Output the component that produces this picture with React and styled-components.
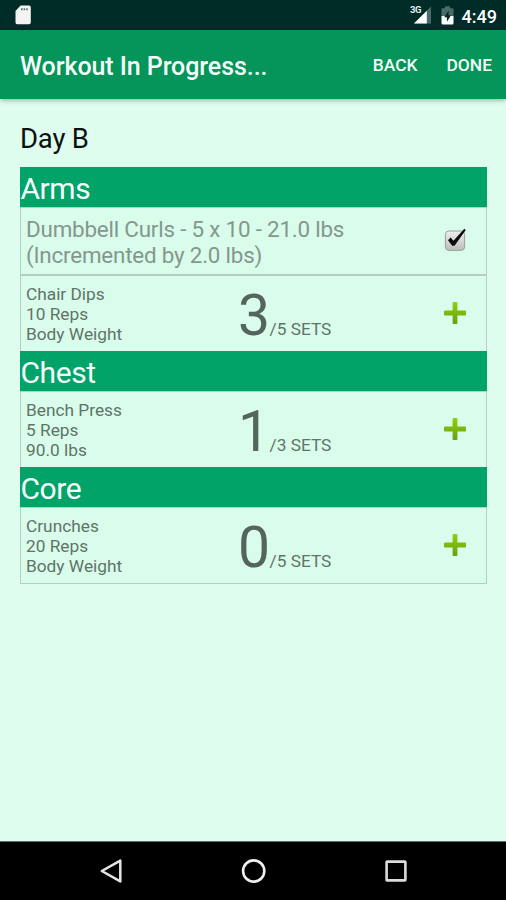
import React, { useState } from 'react';
import styled, { createGlobalStyle } from 'styled-components';

const workout = [
    {
        name: 'Arms',
        exercises: [
            { name: 'Dumbbell Curls', done: true, summary: ['Dumbbell Curls - 5 x 10 - 21.0 lbs', '(Incremented by 2.0 lbs)'] },
            { name: 'Chair Dips', reps: 10, weight: 'Body Weight', completed: 3, sets: 5 },
        ],
    },
    {
        name: 'Chest',
        exercises: [{ name: 'Bench Press', reps: 5, weight: '90.0 lbs', completed: 1, sets: 3 }],
    },
    {
        name: 'Core',
        exercises: [{ name: 'Crunches', reps: 20, weight: 'Body Weight', completed: 0, sets: 5 }],
    },
];

const SdCardIcon = () => (
    <svg width="17" height="20" viewBox="0 0 17 20">
        <path d="M5.6 0.5H14a1.8 1.8 0 0 1 1.8 1.8V17.5a1.8 1.8 0 0 1-1.8 1.8H2.3A1.8 1.8 0 0 1 0.5 17.5V6z" fill="#f4f4f4" />
        <path d="M6.8 3.2v2M9.4 3.2v2M12 3.2v2" stroke="#66706e" strokeWidth="1.6" />
    </svg>
);

const SignalIcon = () => (
    <svg width="22" height="20" viewBox="0 0 22 20">
        <path d="M21 1.5V18.5H4z" fill="#4c6b68" />
        <path d="M16.8 5.7V18.5H4z" fill="#fff" />
        <path d="M0 0H12V9H0z" fill="#002c28" />
        <text x="0" y="8.4" fontSize="9.5" fontWeight="700" fill="#e4ebea" fontFamily="Roboto, sans-serif" textLength="11.5">3G</text>
    </svg>
);

const BatteryIcon = () => (
    <svg width="13" height="19" viewBox="0 0 13 19">
        <path d="M4 0.3h5v1.9h2.3a1.2 1.2 0 0 1 1.2 1.2V10H0.5V3.4a1.2 1.2 0 0 1 1.2-1.2H4z" fill="#4c6b68" />
        <path d="M0.5 10h12v7.3a1.2 1.2 0 0 1-1.2 1.2H1.7a1.2 1.2 0 0 1-1.2-1.2z" fill="#fff" />
        <path d="M7.6 4.6L3.2 11.2h2.7v4.6l4.2-6.6H7.6z" fill="#002c28" />
    </svg>
);

const CheckIcon = () => (
    <svg width="24" height="27" viewBox="0 0 24 27">
        <defs>
            <linearGradient id="box" x1="0" y1="0" x2="0" y2="1">
                <stop offset="0" stopColor="#eeeeee" />
                <stop offset="1" stopColor="#bcbcbc" />
            </linearGradient>
        </defs>
        <rect x="2.4" y="4" width="19.2" height="19.4" rx="3.5" fill="url(#box)" stroke="#98a39d" strokeWidth="1" />
        <path d="M5 13.2L7.6 10.6L10.5 13.8L21.3 1.8L22.8 2.9L11.5 18.8H9.2z" fill="#0c0c0c" />
    </svg>
);

const PlusIcon = () => (
    <svg width="24" height="24" viewBox="0 0 24 24">
        <defs>
            <linearGradient id="plus" x1="0" y1="0" x2="0" y2="1">
                <stop offset="0" stopColor="#91d006" />
                <stop offset="1" stopColor="#66a012" />
            </linearGradient>
        </defs>
        <path
            d="M10.6 1h2.8a1 1 0 0 1 1 1v7.6H22a1 1 0 0 1 1 1v2.8a1 1 0 0 1-1 1h-7.6V22a1 1 0 0 1-1 1h-2.8a1 1 0 0 1-1-1v-7.6H2a1 1 0 0 1-1-1v-2.8a1 1 0 0 1 1-1h7.6V2a1 1 0 0 1 1-1z"
            fill="url(#plus)"
        />
    </svg>
);

const App = () => {
    const [groups, setGroups] = useState(workout);

    const addSet = (exerciseName) => {
        setGroups(groups.map((group) => ({
            ...group,
            exercises: group.exercises.map((ex) => (
                ex.name === exerciseName ? { ...ex, completed: Math.min(ex.completed + 1, ex.sets) } : ex
            )),
        })));
    };

    return (
        <Screen>
            <GlobalStyle />
            <StatusBar>
                <SdCardIcon />
                <StatusIcons>
                    <SignalIcon />
                    <BatteryIcon />
                    <Clock>4:49</Clock>
                </StatusIcons>
            </StatusBar>
            <AppBar>
                <Title>Workout In Progress...</Title>
                <BarButton>BACK</BarButton>
                <BarButton>DONE</BarButton>
            </AppBar>
            <Content>
                <DayName>Day B</DayName>
                <Table>
                    {groups.map((group) => (
                        <React.Fragment key={group.name}>
                            <GroupHeader>{group.name}</GroupHeader>
                            {group.exercises.map((ex) => (
                                ex.done ? (
                                    <Row key={ex.name} $height={67}>
                                        <Summary>
                                            {ex.summary.map((line) => <div key={line}>{line}</div>)}
                                        </Summary>
                                        <Action><CheckIcon /></Action>
                                    </Row>
                                ) : (
                                    <Row key={ex.name} $height={76}>
                                        <Details>
                                            <div>{ex.name}</div>
                                            <div>{ex.reps} Reps</div>
                                            <div>{ex.weight}</div>
                                        </Details>
                                        <Sets>
                                            <Count>{ex.completed}</Count>
                                            /{ex.sets} SETS
                                        </Sets>
                                        <Action onClick={() => addSet(ex.name)}><PlusIcon /></Action>
                                    </Row>
                                )
                            ))}
                        </React.Fragment>
                    ))}
                </Table>
            </Content>
            <NavBar>
                <svg width="24" height="26" viewBox="0 0 24 26">
                    <path d="M21.3 2.6V23.4L2.8 13z" fill="none" stroke="#e6e6e6" strokeWidth="2.5" strokeLinejoin="round" />
                </svg>
                <svg width="26" height="26" viewBox="0 0 26 26">
                    <circle cx="12.7" cy="13" r="10.6" fill="none" stroke="#f0f0f0" strokeWidth="2.6" />
                </svg>
                <svg width="24" height="26" viewBox="0 0 24 26">
                    <rect x="2.6" y="3.6" width="18.8" height="18.8" rx="0.6" fill="none" stroke="#dcdcdc" strokeWidth="2.6" />
                </svg>
            </NavBar>
        </Screen>
    );
};

export default App;

// Styled Components
const GlobalStyle = createGlobalStyle`
    body {
        margin: 0;
        background: #defdee;
    }

    svg {
        display: block;
        flex: none;
    }
`;

const Screen = styled.div`
    display: flex;
    flex-direction: column;
    width: 506px;
    height: 900px;
    background-color: #defdee;
    font-family: Roboto, sans-serif;
    overflow: hidden;
`;

const StatusBar = styled.div`
    display: flex;
    justify-content: space-between;
    align-items: center;
    box-sizing: border-box;
    height: 30px;
    padding: 0 9px 0 15px;
    background-color: #002c28;
`;

const StatusIcons = styled.div`
    display: flex;
    align-items: center;
    gap: 9px;
`;

const Clock = styled.span`
    font-size: 18px;
    font-weight: 500;
    line-height: 22px;
    padding-top: 3px;
    margin-left: -1px;
    color: #fff;
`;

const AppBar = styled.div`
    display: flex;
    align-items: center;
    box-sizing: border-box;
    height: 69px;
    padding: 0 14px 0 20px;
    background-color: #059459;
    box-shadow: 0 1px 5px rgba(0, 0, 0, 0.35);
    color: #f4fff9;
`;

const Title = styled.div`
    flex: 1;
    font-size: 25px;
    font-weight: 500;
    letter-spacing: -0.07px;
    padding-top: 3px;
`;

const BarButton = styled.button`
    border: none;
    padding: 0;
    margin-left: 29px;
    background: none;
    color: inherit;
    font-family: inherit;
    font-size: 17.4px;
    font-weight: 500;
    cursor: pointer;
`;

const Content = styled.div`
    flex: 1;
    padding: 23px 19px 0 20px;
`;

const DayName = styled.div`
    height: 45px;
    font-size: 27.5px;
    line-height: 34px;
    letter-spacing: -0.2px;
    color: #0c1210;
`;

const Table = styled.div`
    border: 1px solid #b2cfc1;
    border-top: none;
    background-color: #d9fceb;
`;

const GroupHeader = styled.div`
    height: 40px;
    margin: 0 -1px;
    background-color: #02a369;
    color: #f6fffb;
    font-size: 30px;
    line-height: 43px;
    letter-spacing: -0.4px;
    text-indent: 0.4px;
`;

const Row = styled.div`
    display: flex;
    align-items: center;
    box-sizing: border-box;
    height: ${(props) => props.$height}px;
    padding: 0 0 1px 5px;
    border-top: 1px solid #b2cfc1;

    & + & {
        height: ${(props) => props.$height + 1}px;
        padding-bottom: 1px;
        border-top-width: 2px;
    }
`;

const Summary = styled.div`
    flex: 1;
    font-size: 22.4px;
    line-height: 26px;
    letter-spacing: -0.2px;
    padding-top: 2px;
    color: #84978e;
`;

const Details = styled.div`
    width: 212px;
    font-size: 17.3px;
    line-height: 20.2px;
    padding-top: 2px;
    color: #5f7469;
`;

const Sets = styled.div`
    flex: 1;
    font-size: 17.3px;
    line-height: 67px;
    padding-top: 18px;
    color: #5f7469;
`;

const Count = styled.span`
    font-size: 57px;
    letter-spacing: -0.5px;
    color: #54655d;
`;

const Action = styled.div`
    display: flex;
    justify-content: center;
    width: 62px;
    cursor: pointer;
`;

const NavBar = styled.div`
    display: flex;
    justify-content: space-between;
    align-items: center;
    box-sizing: border-box;
    height: 59px;
    padding: 0 98px 0 99px;
    border-top: 1px solid #63736b;
    background-color: #000;
`;
